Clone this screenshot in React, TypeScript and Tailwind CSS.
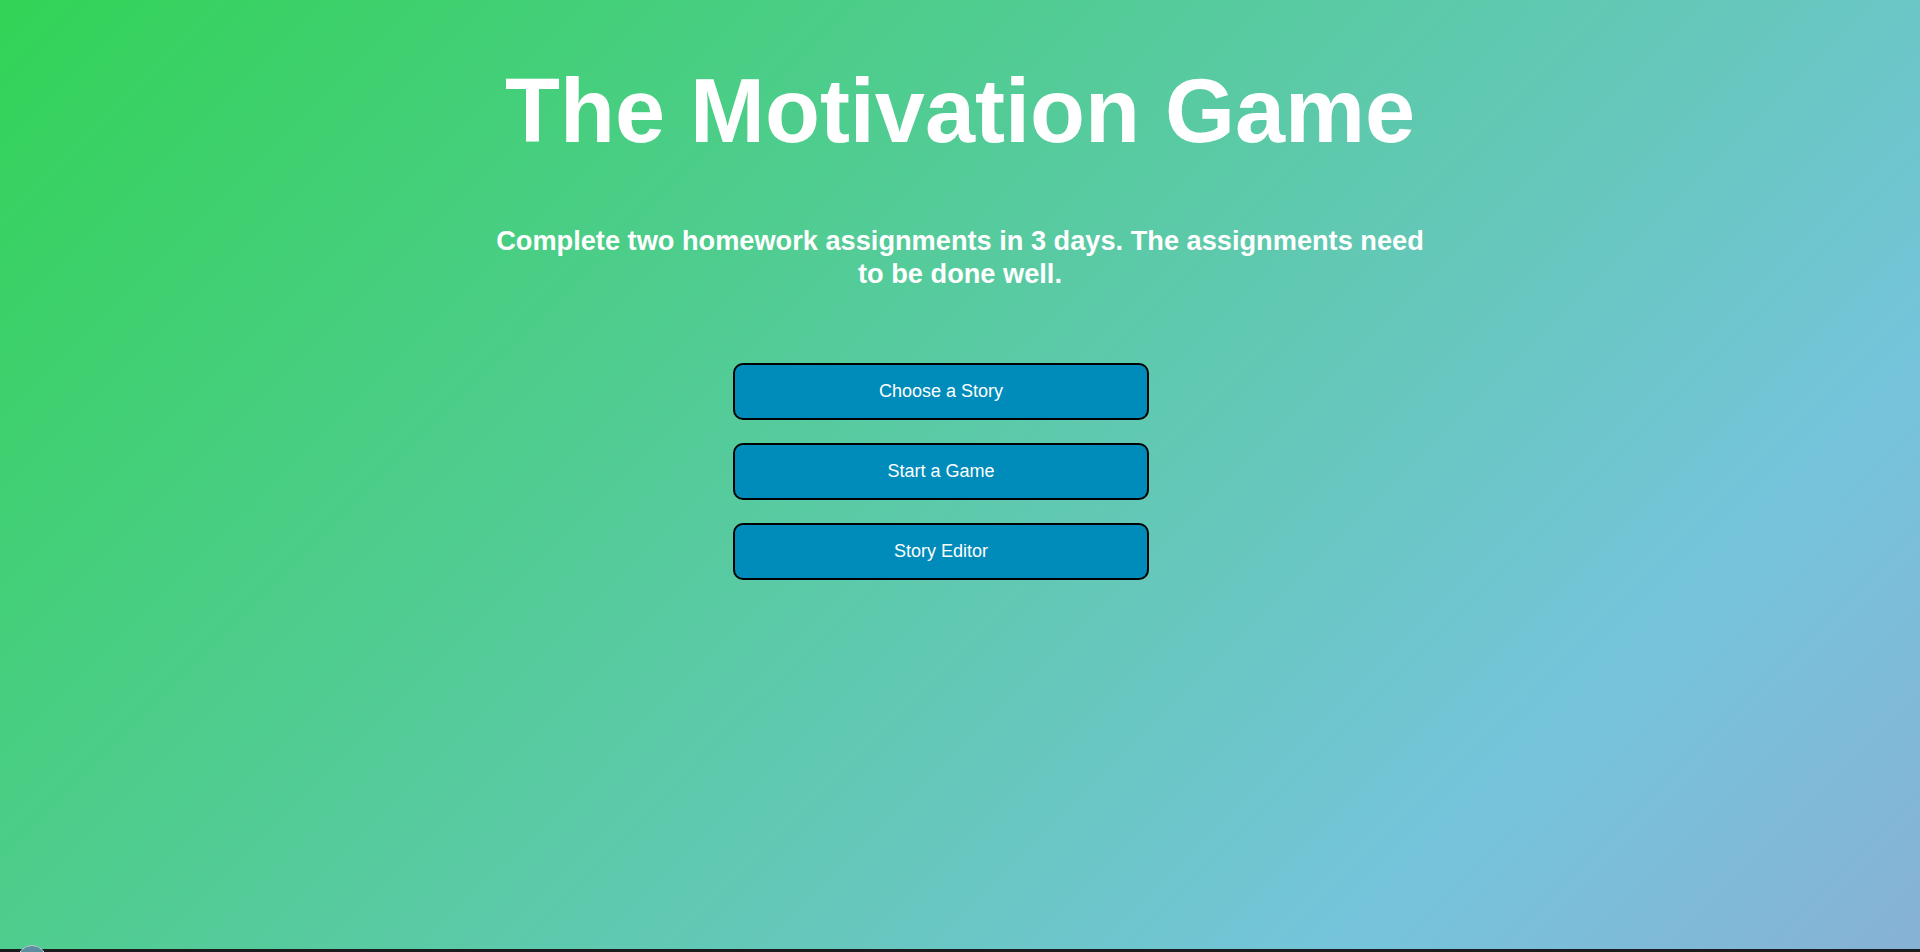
export default function App() {
  const buttons = ['Choose a Story', 'Start a Game', 'Story Editor']

  return (
    <div
      className="relative h-screen w-full overflow-hidden bg-[linear-gradient(135deg,#32d356_0%,#76c4dc_80%,#87b1d5_100%)] text-white"
      style={{ fontFamily: '"Liberation Sans", Arial, sans-serif' }}
    >
      <div className="flex flex-col items-center">
        <h1 className="mt-[60px] text-[90px] font-bold leading-[1.15]">The Motivation Game</h1>
        <p className="mt-[60px] w-[940px] text-center text-[27.2px] font-bold leading-[33px]">
          Complete two homework assignments in 3 days. The assignments need to be done well.
        </p>
        <div className="mr-[38px] mt-[73px] flex flex-col gap-[23px]">
          {buttons.map((label) => (
            <button
              key={label}
              className="h-[57px] w-[416px] rounded-[10px] border-2 border-black bg-[#008cba] text-[18px] text-white"
            >
              {label}
            </button>
          ))}
        </div>
      </div>

      {/* bottom strip from the host page */}
      <div className="absolute bottom-0 left-0 h-[3px] w-full bg-[#1a1c1e]" />
      <div className="absolute left-[17px] top-[945px] h-[30px] w-[30px] rounded-full border border-[#b8c9cf] bg-[#5a8d9e]" />
    </div>
  )
}
